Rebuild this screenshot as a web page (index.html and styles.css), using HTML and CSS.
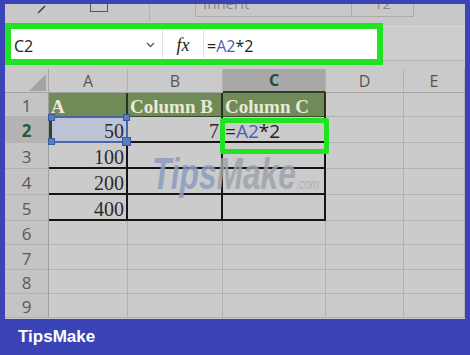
FILE: index.html
```html
<!DOCTYPE html>
<html>
<head>
<meta charset="utf-8">
<link rel="stylesheet" href="styles.css">
</head>
<body>
<div class="frame">
  <div class="app">
    <div class="ribbon">
      <svg class="pen" width="9" height="9" viewBox="0 0 9 9"><line x1="1" y1="8" x2="8" y2="1" stroke="#444" stroke-width="1.6"/></svg>
      <div class="sq"></div>
      <div class="vline"></div>
      <div class="fontbox"><span>Inherit</span></div>
      <div class="sizebox"><span>12</span></div>
    </div>
    <div class="fbar-row">
      <div class="fbar">
        <div class="namebox"><span>C2</span><svg width="9" height="6" viewBox="0 0 9 6"><path d="M1 1 L4.5 4.5 L8 1" fill="none" stroke="#555" stroke-width="1.3"/></svg></div>
        <div class="sep"></div>
        <div class="fx">fx</div>
        <div class="sep"></div>
        <div class="formula">=<span class="ref">A2</span>*2</div>
      </div>
      <div class="fbar-rest"></div>
    </div>
    <div class="gap"></div>
    <div class="grid">
      <div class="c corner"><svg width="17" height="17" viewBox="0 0 17 17"><polygon points="17,0 17,17 0,17" fill="#a4a4a4"/></svg></div>
      <div class="c ch">A</div>
      <div class="c ch">B</div>
      <div class="c ch chsel">C</div>
      <div class="c ch">D</div>
      <div class="c ch">E</div>

      <div class="c rh">1</div>
      <div class="c g">A</div>
      <div class="c g">Column B</div>
      <div class="c g">Column C</div>
      <div class="c"></div>
      <div class="c"></div>

      <div class="c rh rhsel">2</div>
      <div class="c num tb sel">50<div class="selbox"><i class="h tl"></i><i class="h tr"></i><i class="h bl"></i><i class="h br"></i></div></div>
      <div class="c num tb">7</div>
      <div class="c tb f2">=<span class="ref">A2</span>*2<div class="hl"></div></div>
      <div class="c"></div>
      <div class="c"></div>

      <div class="c rh">3</div>
      <div class="c num tb">100</div>
      <div class="c tb"></div>
      <div class="c tb"></div>
      <div class="c"></div>
      <div class="c"></div>

      <div class="c rh">4</div>
      <div class="c num tb">200</div>
      <div class="c tb"></div>
      <div class="c tb"></div>
      <div class="c"></div>
      <div class="c"></div>

      <div class="c rh">5</div>
      <div class="c num tb">400</div>
      <div class="c tb"></div>
      <div class="c tb"></div>
      <div class="c"></div>
      <div class="c"></div>

      <div class="c rh">6</div>
      <div class="c"></div><div class="c"></div><div class="c"></div><div class="c"></div><div class="c"></div>
      <div class="c rh">7</div>
      <div class="c"></div><div class="c"></div><div class="c"></div><div class="c"></div><div class="c"></div>
      <div class="c rh">8</div>
      <div class="c"></div><div class="c"></div><div class="c"></div><div class="c"></div><div class="c"></div>
      <div class="c rh">9</div>
      <div class="c"></div><div class="c"></div><div class="c"></div><div class="c"></div><div class="c"></div>

      <div class="watermark"><span class="wm-tips">Tips</span><span class="wm-make">Make</span><span class="wm-com">.com</span></div>
    </div>
  </div>
  <div class="footer">TipsMake</div>
</div>
</body>
</html>
```
FILE: styles.css
```css
body {
  margin: 0;
}
.frame {
  width: 470px;
  height: 355px;
  box-sizing: border-box;
  padding: 4px 5px 0;
  background: #3a44b7;
  display: flex;
  flex-direction: column;
  font-family: "Open Sans", "Liberation Sans", sans-serif;
}
.app {
  height: 315px;
  flex: none;
  background: #c9c9c9;
  display: flex;
  flex-direction: column;
  overflow: hidden;
}
.footer {
  flex: 1;
  display: flex;
  align-items: center;
  padding-left: 13px;
  color: #fff;
  font: bold 17px "Liberation Sans", Arial, sans-serif;
}

/* ribbon remnants */
.ribbon {
  height: 19px;
  flex: none;
  display: flex;
  align-items: flex-start;
  background: #c8c8c8;
}
.pen {
  margin-left: 32px;
  margin-top: 1px;
}
.sq {
  margin-left: 44px;
  width: 16px;
  height: 7px;
  border: 1.5px solid #555;
  border-top: none;
}
.vline {
  margin-left: 41px;
  width: 1px;
  height: 17px;
  background: #b3b3b3;
}
.fontbox, .sizebox {
  height: 12px;
  border: 1px solid #ababab;
  border-top: none;
  overflow: hidden;
  color: #8a8a8a;
  font-size: 15px;
  line-height: 15px;
  box-sizing: content-box;
}
.fontbox {
  margin-left: 45px;
  width: 155px;
  border-right: none;
}
.fontbox span {
  display: block;
  margin-top: -8px;
  padding-left: 7px;
}
.sizebox {
  width: 61px;
}
.sizebox span {
  display: block;
  margin-top: -8px;
  padding-left: 22px;
}

/* formula bar */
.fbar-row {
  height: 42px;
  flex: none;
  display: flex;
}
.fbar {
  width: 378px;
  box-sizing: border-box;
  border: 6px solid #22e322;
  background: #fff;
  display: flex;
}
.namebox {
  width: 151px;
  box-sizing: border-box;
  display: flex;
  align-items: center;
  justify-content: space-between;
  padding: 3px 7px 0 3px;
  font-size: 16px;
  color: #222;
}
.namebox svg {
  margin-top: -2px;
}
.sep {
  width: 1px;
  background: #e2e2e2;
  margin: 1px 0;
}
.fx {
  width: 40px;
  display: flex;
  align-items: center;
  justify-content: center;
  padding-top: 2px;
  font: italic 18px "Liberation Serif", serif;
  color: #222;
}
.formula {
  display: flex;
  align-items: center;
  padding: 3px 0 0 3px;
  font-size: 16px;
  color: #222;
}
.ref {
  color: #4a5fb5;
}
.fbar-rest {
  flex: 1;
  margin-top: 3px;
  border-top: 1px solid #d8d8d8;
  border-bottom: 1px solid #b4b4b4;
  margin-bottom: 4px;
  background: #cdcdcd;
}
.gap {
  height: 4px;
  flex: none;
}

/* grid */
.grid {
  position: relative;
  display: grid;
  grid-template-columns: 44px 79px 95px 103px 78px 61px;
  grid-template-rows: 24px 24px 26px 26px 26px 26px 24px 25px 24px 24px;
  background: #cbcbcb;
}
.c {
  box-sizing: border-box;
  border-right: 1px solid #b2b2b2;
  border-bottom: 1px solid #b2b2b2;
  display: flex;
  align-items: center;
  position: relative;
  min-width: 0;
}
.corner {
  justify-content: flex-end;
  align-items: flex-end;
  padding: 0 2px 1px 0;
  background: #c8c8c8;
  border-right-color: #a5a5a5;
  border-bottom-color: #a5a5a5;
}
.ch {
  justify-content: center;
  color: #555;
  font-size: 16px;
  background: #cacaca;
  border-bottom-color: #a3a3a3;
}
.chsel {
  background: #a8a8a8;
  color: #2a4634;
  font-weight: bold;
  border-bottom: 2px solid #2e3d2a;
}
.rh {
  justify-content: center;
  padding-top: 2px;
  color: #595959;
  font-size: 17px;
  background: #c4c4c4;
  border-right-color: #9f9f9f;
}
.rhsel {
  background: #b4b4b4;
  color: #2a5a3a;
  font-weight: bold;
}
.g {
  background: #718b57;
  color: #e8e9d6;
  font: bold 19px "Liberation Serif", serif;
  align-items: flex-start;
  padding: 3px 0 0 2px;
  white-space: nowrap;
  border-right: 2px solid #26331f;
  border-bottom: 1px solid #3a4a30;
}
.num {
  justify-content: flex-end;
  align-items: flex-start;
  padding: 4px 2px 0 0;
  font: 20px/20px "Liberation Serif", serif;
  color: #2a2a2a;
}
.tb {
  border-right: 2px solid #151515;
  border-bottom: 2px solid #151515;
}
.sel {
  background: #bdc3d5;
}
.selbox {
  position: absolute;
  left: 0;
  top: -1px;
  right: -2px;
  bottom: -2px;
  border: 2px solid #4666ab;
  border-left: 3px solid #2b4532;
  z-index: 2;
}
.h {
  position: absolute;
  width: 5px;
  height: 5px;
  background: #5a7cc0;
  border: 1px solid #3a5a9c;
}
.tl { left: -4px; top: -4px; }
.tr { right: -4px; top: -4px; }
.bl { left: -4px; bottom: -4px; }
.br { right: -5px; bottom: -5px; width: 7px; height: 7px; }

.f2 {
  align-items: flex-start;
  padding: 4px 0 0 2px;
  font: 19px/20px "Open Sans", "Liberation Sans", sans-serif;
  color: #222;
  white-space: nowrap;
}
.hl {
  position: absolute;
  left: -3px;
  top: 1px;
  width: 109px;
  height: 36px;
  box-sizing: border-box;
  border: 5px solid #22e322;
  border-radius: 2px;
  z-index: 3;
}
.watermark {
  position: absolute;
  left: 147px;
  top: 83px;
  font: italic bold 44px/44px "Liberation Sans", Arial, sans-serif;
  transform: scaleX(0.72);
  transform-origin: left top;
  white-space: nowrap;
  opacity: 0.85;
  z-index: 1;
}
.wm-tips {
  color: #8b9cc2;
}
.wm-make {
  color: #9ea3ae;
}
.wm-com {
  font-size: 15px;
  color: #a8abb3;
  font-weight: normal;
}
```
